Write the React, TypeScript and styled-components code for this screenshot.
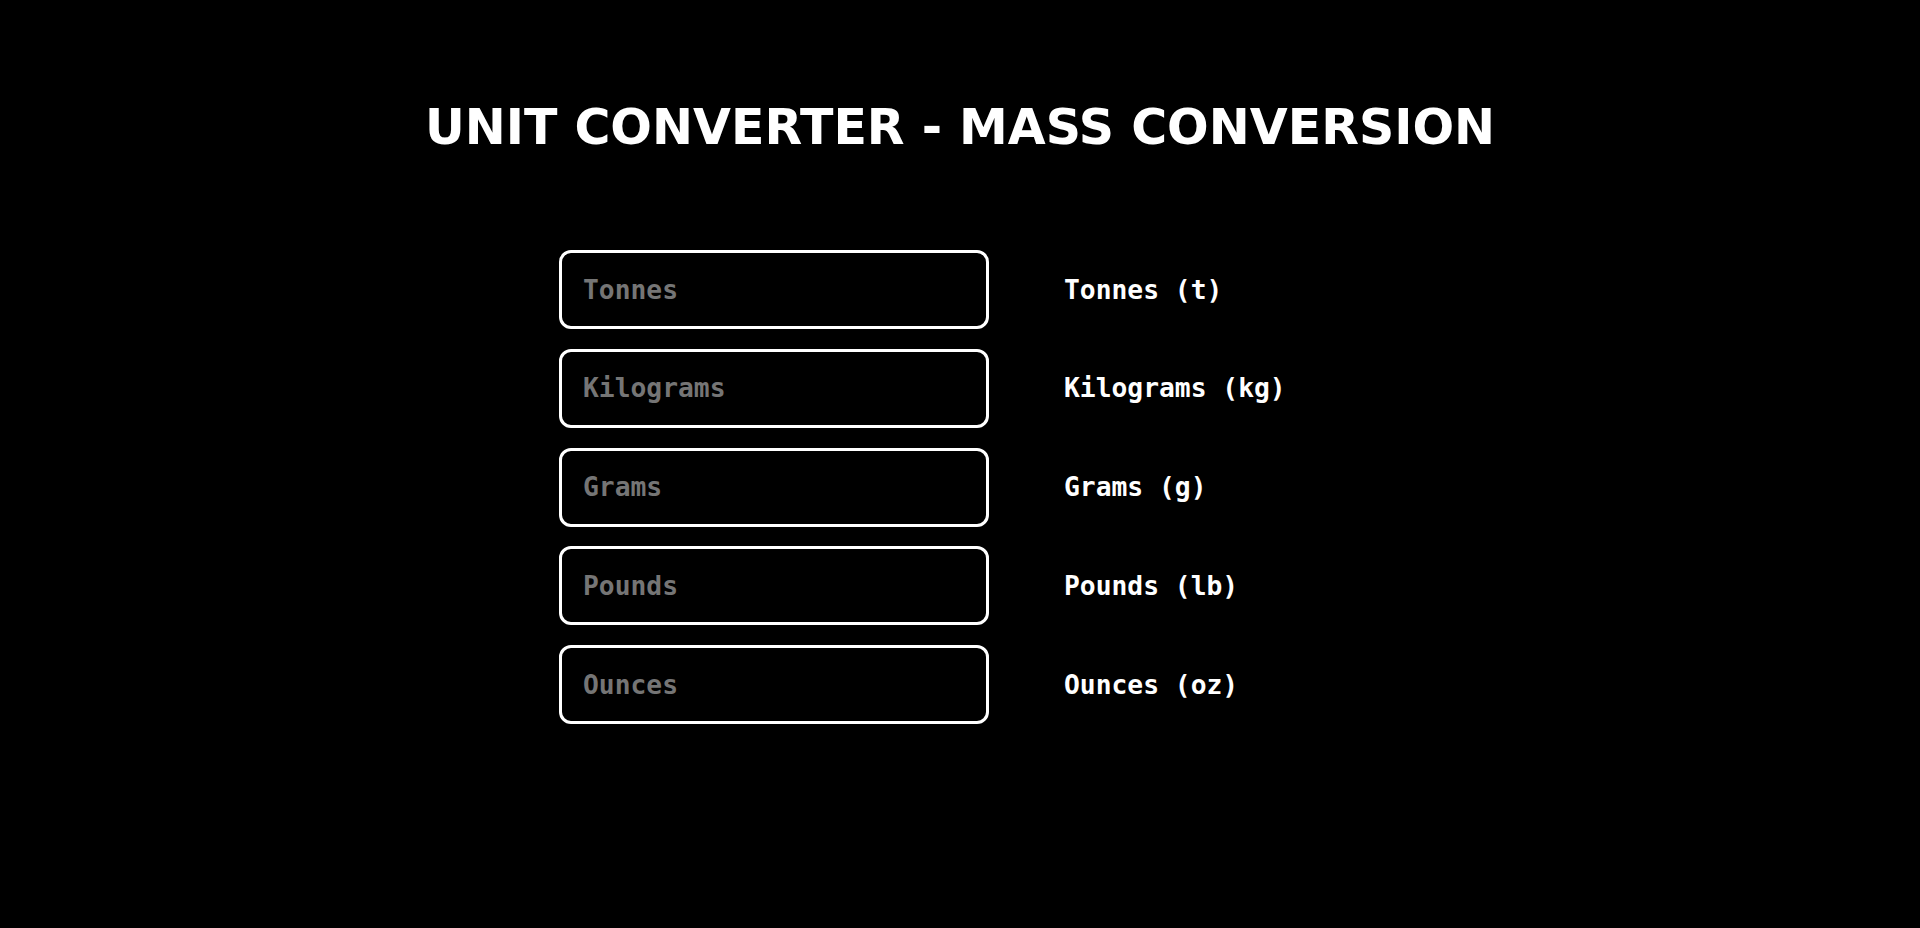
import React from "react";
import styled, { createGlobalStyle } from "styled-components";

const GlobalStyle = createGlobalStyle`
  html, body {
    margin: 0;
    padding: 0;
    background: #000;
  }
  body {
    min-height: 928px;
  }
`;

const Page = styled.main`
  display: flex;
  flex-direction: column;
  align-items: center;
  padding-top: 100px;
  background: #000;
  min-height: 928px;
  box-sizing: border-box;
`;

const Title = styled.h1`
  margin: 0;
  font-family: "DejaVu Sans", Verdana, sans-serif;
  font-weight: bold;
  font-size: 49px;
  line-height: 56px;
  color: #fff;
  text-align: center;
`;

const Form = styled.form`
  width: 802px;
  margin-top: 94px;
  display: flex;
  flex-direction: column;
  gap: 19.75px;
`;

const Row = styled.div`
  display: grid;
  grid-template-columns: 430px 1fr;
  column-gap: 75px;
  align-items: center;
`;

const Field = styled.input`
  box-sizing: border-box;
  width: 430px;
  height: 79px;
  padding: 0 21px;
  border: 3px solid #fff;
  border-radius: 12px;
  background: #000;
  color: #fff;
  font-family: "DejaVu Sans Mono", "Liberation Mono", monospace;
  font-weight: bold;
  font-size: 26.3px;
  outline: none;

  &::placeholder {
    color: #757575;
    opacity: 1;
  }
`;

const Label = styled.label`
  font-family: "DejaVu Sans Mono", "Liberation Mono", monospace;
  font-weight: bold;
  font-size: 26.3px;
  color: #fff;
  white-space: nowrap;
`;

const units = [
  { id: "tonnes", name: "Tonnes", label: "Tonnes (t)" },
  { id: "kilograms", name: "Kilograms", label: "Kilograms (kg)" },
  { id: "grams", name: "Grams", label: "Grams (g)" },
  { id: "pounds", name: "Pounds", label: "Pounds (lb)" },
  { id: "ounces", name: "Ounces", label: "Ounces (oz)" },
];

export default function App() {
  return (
    <>
      <GlobalStyle />
      <Page>
        <Title>UNIT CONVERTER - MASS CONVERSION</Title>
        <Form onSubmit={(e) => e.preventDefault()}>
          {units.map((u) => (
            <Row key={u.id}>
              <Field id={u.id} type="text" placeholder={u.name} />
              <Label htmlFor={u.id}>{u.label}</Label>
            </Row>
          ))}
        </Form>
      </Page>
    </>
  );
}
